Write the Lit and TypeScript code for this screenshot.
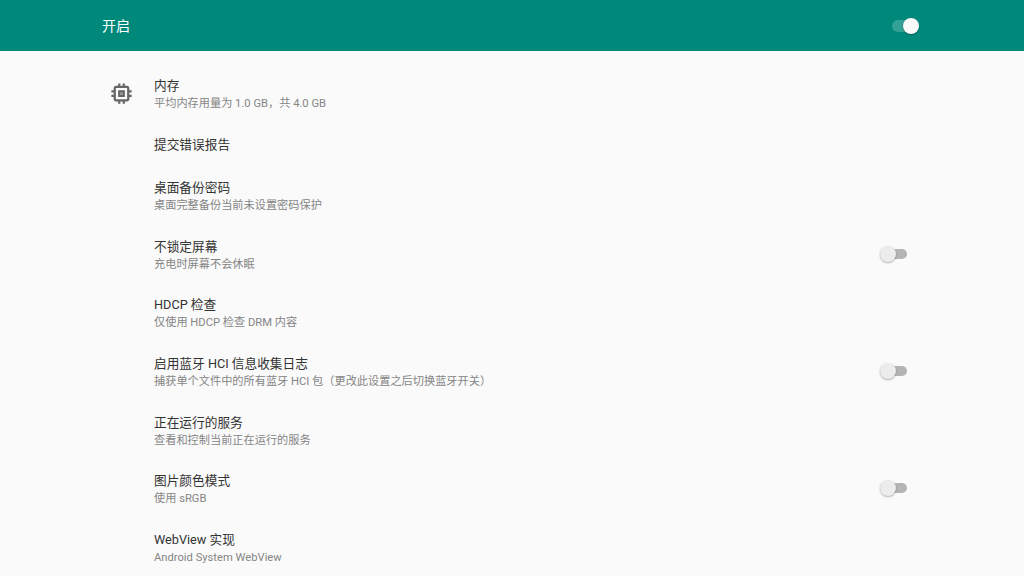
import { LitElement, html, css, nothing } from "lit";
import { customElement } from "lit/decorators.js";
import { classMap } from "lit/directives/class-map.js";

const rows: { t: string; s?: string; sw?: boolean }[] = [
  { t: "内存", s: "平均内存用量为 1.0 GB，共 4.0 GB" },
  { t: "提交错误报告" },
  { t: "桌面备份密码", s: "桌面完整备份当前未设置密码保护" },
  { t: "不锁定屏幕", s: "充电时屏幕不会休眠", sw: true },
  { t: "HDCP 检查", s: "仅使用 HDCP 检查 DRM 内容" },
  { t: "启用蓝牙 HCI 信息收集日志", s: "捕获单个文件中的所有蓝牙 HCI 包（更改此设置之后切换蓝牙开关）", sw: true },
  { t: "正在运行的服务", s: "查看和控制当前正在运行的服务" },
  { t: "图片颜色模式", s: "使用 sRGB", sw: true },
  { t: "WebView 实现", s: "Android System WebView" },
];

@customElement("app-root")
export class AppRoot extends LitElement {
  static styles = css`
    :host { display: block; width: 1024px; height: 576px; overflow: hidden; background: #fafafa;
      font-family: Roboto, "Noto Sans CJK SC", sans-serif; }
    .bar { height: 51.3px; background: #00897b; display: flex; align-items: center; justify-content: space-between;
      padding: 0 105px 2px 102px; box-sizing: border-box; color: #fff; font-size: 14px; }
    .top-sw { position: relative; width: 27px; height: 12px; border-radius: 6px; background: #33a195; margin-top: 2px; }
    .top-sw i { position: absolute; right: 0; top: -2px; width: 16px; height: 16px; border-radius: 50%; background: #fafafa; box-shadow: 0 1px 2px rgba(0,0,0,.3); }
    .list { display: flex; flex-direction: column; padding-top: 14.6px; }
    .row { height: 58.6px; flex: none; display: flex; align-items: center; padding: 0 117px 0 108px; box-sizing: border-box; }
    .row.first { padding-bottom: 3px; }
    .row.single { height: 42.4px; padding-bottom: 2.4px; }
    .icon { width: 46px; flex: none; display: flex; box-sizing: border-box; }
    .text { flex: 1; display: flex; flex-direction: column; }
    .t { font-size: 12.7px; line-height: 17px; color: #333333; }
    .s { font-size: 11.2px; line-height: 15px; color: #858585; margin-top: 2px; }
    .sw { position: relative; width: 27px; height: 10px; border-radius: 5px; background: #b4b4b4; margin-bottom: 2px; }
    .sw i { position: absolute; left: 0; top: -3px; width: 16px; height: 16px; border-radius: 50%; background: #ececec; box-shadow: 0 1px 2px rgba(0,0,0,.3); }
  `;
  render() {
    return html`
      <div class="bar"><span>开启</span><div class="top-sw"><i></i></div></div>
      <div class="list">
        ${rows.map((r, i) => html`
          <div class=${classMap({ row: true, first: i === 0, single: !r.s })}>
            <div class="icon">${i === 0 ? html`<svg width="27" height="27" viewBox="0 0 24 24" fill="#666666"><rect x="11" y="11" width="2" height="2" fill="#8f8f8f"/><path d="M15 9H9v6h6V9zm-2 4h-2v-2h2v2zm8-2V9h-2V7c0-1.1-.9-2-2-2h-2V3h-2v2h-2V3H9v2H7c-1.1 0-2 .9-2 2v2H3v2h2v2H3v2h2v2c0 1.1.9 2 2 2h2v2h2v-2h2v2h2v-2h2c1.1 0 2-.9 2-2v-2h2v-2h-2v-2h2zm-4 6H7V7h10v10z"/></svg>` : nothing}</div>
            <div class="text"><div class="t">${r.t}</div>${r.s ? html`<div class="s">${r.s}</div>` : nothing}</div>
            ${r.sw ? html`<div class="sw"><i></i></div>` : nothing}
          </div>`)}
      </div>`;
  }
}
